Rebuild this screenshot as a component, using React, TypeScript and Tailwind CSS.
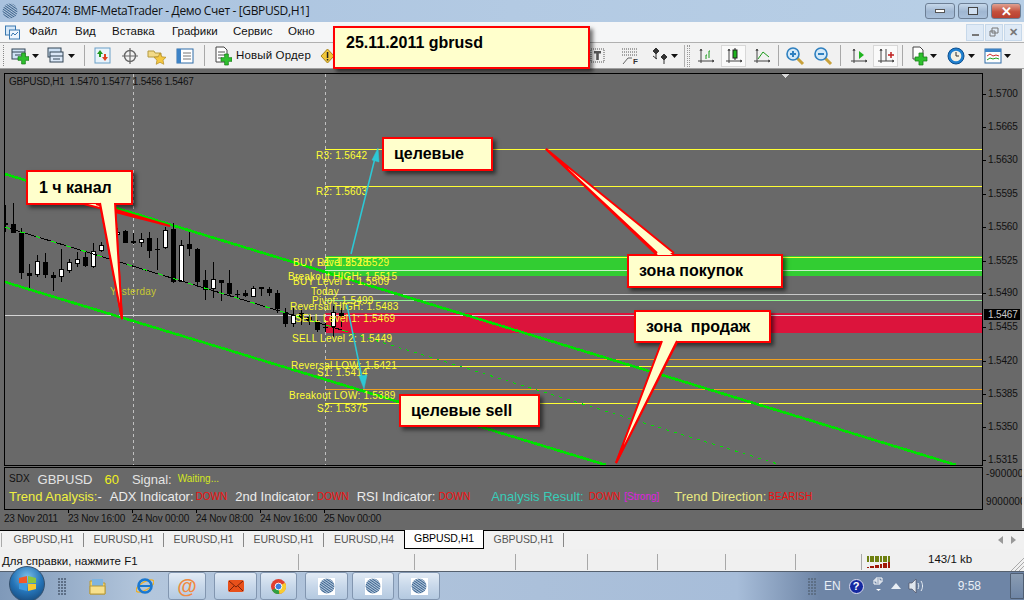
import React from "react";

const UI = "font-['Liberation_Sans',sans-serif]";

// candles in screen coordinates: [x, wickTop, bodyTop, bodyBottom, wickBottom, white]
const z3: [number, number, number, number, number, number][] = [
  [5, 135, 188, 196, 215, 0], [13, 130, 193, 218, 218, 0], [21, 205, 218, 338, 357, 0], [29, 312, 339, 347, 385, 0],
  [37, 285, 304, 344, 350, 1], [45, 280, 306, 345, 353, 0], [53, 337, 345, 353, 392, 0], [61, 267, 328, 350, 365, 1],
  [69, 297, 307, 332, 340, 1], [77, 277, 298, 311, 322, 1], [85, 277, 291, 318, 322, 0], [93, 250, 272, 322, 323, 1],
  [101, 245, 256, 272, 275, 1], [117, 205, 216, 226, 235, 1], [125, 210, 213, 248, 250, 0], [133, 220, 244, 250, 252, 0],
  [141, 220, 238, 248, 262, 1], [149, 215, 235, 272, 293, 0], [157, 235, 266, 268, 330, 0], [165, 200, 210, 265, 267, 1],
  [173, 190, 206, 365, 368, 0], [181, 240, 256, 365, 367, 1], [189, 215, 252, 266, 288, 0], [197, 265, 266, 365, 380, 0],
];
const z10: [number, number, number, number, number, number][] = [
  [205, 165, 195, 225, 255, 0], [213, 142, 192, 223, 250, 1], [221, 195, 195, 204, 257, 0], [229, 165, 205, 236, 240, 0],
  [237, 225, 236, 238, 248, 0], [245, 225, 233, 243, 245, 0], [253, 213, 220, 245, 246, 1], [261, 215, 216, 222, 242, 0],
  [269, 215, 222, 233, 243, 0], [277, 225, 235, 282, 295, 0], [285, 280, 290, 327, 335, 0], [293, 280, 300, 328, 335, 1],
  [301, 280, 295, 305, 330, 0], [309, 300, 305, 320, 330, 0], [317, 315, 322, 345, 350, 0], [325, 325, 335, 337, 350, 0],
];
const candles = [
  ...z3.map(([x, a, b, c, d, w]) => [x, 160 + a / 3, 160 + b / 3, 160 + c / 3, 160 + d / 3, w]),
  ...z10.map(([x, a, b, c, d, w]) => [x, 215 + a / 3, 215 + b / 3, 215 + c / 3, 215 + d / 3, w]),
  [333, 306, 312, 327, 337, 1],
  [341, 308, 313, 316, 327, 0],
].map((c) => c.map(Math.round));

const labels: [string, number, number][] = [
  ["R3: 1.5642", 316, 159], ["R2: 1.5603", 316, 195], ["BUY Level 2: 1.5529", 293, 266], ["R1: 1.5528", 317, 266],
  ["Breakout HIGH: 1.5515", 288, 280], ["BUY Level 1: 1.5509", 293, 285], ["Today", 311, 295], ["Pivot: 1.5499", 312, 304],
  ["Reversal HIGH: 1.5483", 290, 310], ["SELL Level 1: 1.5469", 295, 322], ["SELL Level 2: 1.5449", 292, 342],
  ["Reversal LOW: 1.5421", 291, 369], ["S1: 1.5414", 317, 376], ["Breakout LOW: 1.5389", 289, 399], ["S2: 1.5375", 317, 412],
];

const axis = [["1.5700", 94], ["1.5665", 127], ["1.5630", 160], ["1.5595", 194], ["1.5560", 227], ["1.5525", 261], ["1.5490", 293], ["1.5455", 327], ["1.5420", 361], ["1.5385", 394], ["1.5350", 427], ["1.5315", 460]] as [string, number][];

function Chart() {
  return (
    <svg viewBox="5 74 977 391" className="block h-[391px] w-[977px]" shapeRendering="crispEdges">
      <rect x="5" y="74" width="977" height="391" fill="#696969" />
      <rect x="325" y="256" width="657" height="20" fill="#32cd32" />
      <rect x="325" y="313" width="657" height="20" fill="#dc143c" />
      <line x1="133" y1="74" x2="133" y2="465" stroke="#c0c0c0" strokeDasharray="3 3" />
      <line x1="325" y1="74" x2="325" y2="465" stroke="#c0c0c0" strokeDasharray="3 3" />
      <line x1="325" y1="149.5" x2="982" y2="149.5" stroke="#ffff33" />
      <line x1="325" y1="186.5" x2="982" y2="186.5" stroke="#ffff33" />
      <line x1="325" y1="257.5" x2="982" y2="257.5" stroke="#ffff33" />
      <line x1="325" y1="270.5" x2="982" y2="270.5" stroke="#c8f0c8" />
      <line x1="325" y1="294.5" x2="982" y2="294.5" stroke="#c8c8c8" />
      <line x1="325" y1="300.5" x2="982" y2="300.5" stroke="#90ee90" />
      <line x1="5" y1="315.5" x2="982" y2="315.5" stroke="#d4d4d4" />
      <line x1="325" y1="359.5" x2="982" y2="359.5" stroke="#f0a020" />
      <line x1="325" y1="366.5" x2="982" y2="366.5" stroke="#ffff33" />
      <line x1="325" y1="389.5" x2="982" y2="389.5" stroke="#f0a020" />
      <line x1="325" y1="403.5" x2="982" y2="403.5" stroke="#ffff33" />
      <line x1="5" y1="174" x2="956" y2="465" stroke="#00e000" strokeWidth="2.6" />
      <line x1="5" y1="282" x2="606" y2="465" stroke="#00e000" strokeWidth="2.6" />
      {candles.map(([x, a, b, c, d, w]) => (
        <g key={x}>
          <rect x={x} y={a} width="1" height={d - a} fill="#000" />
          <rect x={x - 2} y={b} width="5" height={Math.max(c - b, 1)} fill="#000" />
          {w ? <rect x={x - 1} y={b + 1} width="3" height={Math.max(c - b - 2, 1)} fill="#fff" /> : null}
        </g>
      ))}
      <line x1="5" y1="227" x2="345" y2="331" stroke="#000" />
      <line x1="5" y1="227" x2="345" y2="331" stroke="#00ff00" strokeDasharray="5 11" />
      <line x1="345" y1="331" x2="781" y2="465" stroke="#00e000" strokeDasharray="3 5" />
      <path d="M782 74h7l-3.500 4z" fill="#d8d8d8" />
      <g shapeRendering="auto" fontFamily="'Liberation Sans',sans-serif" fontSize="10" letterSpacing="0.25">
        <text x="110" y="295" fill="#c8c832">Yesterday</text>
        {labels.map(([t, x, y]) => (
          <text key={t} x={x} y={y} fill="#ffff33">{t}</text>
        ))}
      </g>
      <text x="9" y="85" fontFamily="'Liberation Sans',sans-serif" fontSize="10" fill="#111" shapeRendering="auto" letterSpacing="-0.25" style={{ whiteSpace: "pre" }}>GBPUSD,H1  1.5470 1.5477 1.5456 1.5467</text>
      <g shapeRendering="auto" fill="#2cc8d6" stroke="#2cc8d6">
        <line x1="351" y1="254" x2="375" y2="158" strokeWidth="1.5" />
        <path d="M378 148l1 14-7-2z" strokeWidth="0.5" />
        <line x1="347" y1="305" x2="362" y2="378" strokeWidth="1.5" />
        <path d="M364 389l-5-13 8-1z" strokeWidth="0.5" />
      </g>
    </svg>
  );
}

function Callout({ x, y, w, h, t, px = 10, pb = 0 }: { x: number; y: number; w: number; h: number; t: string; px?: number; pb?: number }) {
  return (
    <div
      className={`absolute flex items-center whitespace-pre border-[2px] border-[#ff0000] bg-[#ffffcc] text-[16px] font-bold text-black shadow-[3px_3px_4px_rgba(0,0,0,0.55)] ${UI}`}
      style={{ left: x, top: y, width: w, height: h, paddingLeft: px, paddingBottom: pb }}
    >
      {t}
    </div>
  );
}

const Drop = () => <svg width="7" height="4" viewBox="0 0 7 4" className="shrink-0"><path d="M0 0h7L3.500 4z" fill="#111" /></svg>;
const Sep = () => <div className="mx-[1px] h-[21px] w-[1px] shrink-0 bg-[#a8a8a8]" />;
const Plus = ({ x, y, s = 11 }: { x: number; y: number; s?: number }) => (
  <path d={`M${x + s * 0.33} ${y}h${s * 0.34}v${s * 0.33}h${s * 0.33}v${s * 0.34}h${-s * 0.33}v${s * 0.33}h${-s * 0.34}v${-s * 0.33}h${-s * 0.33}v${-s * 0.34}h${s * 0.33}z`} fill="#2fc02f" stroke="#147a14" strokeWidth="0.7" />
);
const I = ({ children, w = 18 }: { children: React.ReactNode; w?: number }) => <svg width={w} height="20" viewBox={`0 0 ${w} 20`} className="shrink-0">{children}</svg>;

const Sphere = ({ size = 16 }: { size?: number }) => (
  <svg width={size} height={size} viewBox="0 0 16 16" className="shrink-0">
    <defs>
      <pattern id="dots" width="2" height="2" patternUnits="userSpaceOnUse" patternTransform="rotate(35)">
        <rect width="2" height="1" fill="#3c648f" /><rect y="1" width="2" height="1" fill="#b8cbdf" />
      </pattern>
    </defs>
    <circle cx="8" cy="8" r="7.500" fill="url(#dots)" />
  </svg>
);

const AxisIcon = ({ children }: { children: React.ReactNode }) => (
  <I><path d="M4 3v14M1 15h16M4 3l-1 2M4 3l1 2M15 14l2 1-2 1" stroke="#444" fill="none" strokeWidth="1" />{children}</I>
);

const Active = ({ children }: { children: React.ReactNode }) => (
  <div className="flex h-[22px] w-[25px] items-center justify-center border border-[#d8d8d8] bg-[#fafafa]">{children}</div>
);

function Toolbar() {
  return (
    <div className="flex h-[26px] shrink-0 items-center border-b border-[#a0a0a0] bg-[#f1f1f1] pl-[3px]">
      <div className="mr-[6px] h-[21px] w-[2px] border-l border-dotted border-[#888]" />
      <I><rect x="1" y="3" width="13" height="10" fill="#cfe2f5" stroke="#345" /><path d="M1 6h13M4 9h7" stroke="#345" /><Plus x={7} y={7} /></I>
      <div className="ml-[3px] mr-[8px]"><Drop /></div>
      <I><rect x="1" y="2" width="13" height="9" fill="#cfe2f5" stroke="#345" /><rect x="3" y="6" width="13" height="10" fill="#dbe8f7" stroke="#345" /><path d="M3 10h13M6 13h7" stroke="#345" /></I>
      <div className="ml-[3px] mr-[8px]"><Drop /></div>
      <Sep />
      <div className="ml-[7px]"><I><rect x="2" y="2" width="15" height="15" fill="#e8f3fb" stroke="#6aa0c8" /><path d="M7 4l3 4H8v3H6V8H4z" fill="#1e9a1e" /><path d="M12 15l-3-4h2V8h2v3h2z" fill="#e04020" /></I></div>
      <div className="ml-[9px]"><I w={20}><circle cx="10" cy="10" r="5.500" fill="none" stroke="#666" strokeWidth="1.400" /><path d="M10 2v16M2 10h16" stroke="#666" strokeWidth="1.200" /></I></div>
      <div className="ml-[7px]"><I w={20}><path d="M1 5h6l1 2h6v4H1z" fill="#f3da88" stroke="#b49a40" /><path d="M13 7l1.800 3.800 4.200.5-3 2.900.8 4.100-3.800-2-3.800 2 .8-4.100-3-2.900 4.200-.5z" fill="#f5c842" stroke="#b08a20" strokeWidth=".7" /></I></div>
      <div className="ml-[9px]"><I><rect x="1" y="3" width="16" height="14" fill="#fff" stroke="#2f6da8" /><rect x="1" y="3" width="4" height="14" fill="#3d83c6" /><path d="M7 7h8M7 10h8M7 13h8" stroke="#777" /></I></div>
      <div className="ml-[9px]"><Sep /></div>
      <div className="ml-[8px]"><I><path d="M2 1h8l3 3v12H2z" fill="#fff" stroke="#444" /><path d="M4 6h7M4 9h7M4 12h4" stroke="#555" /><Plus x={7} y={8} /></I></div>
      <span className="ml-[4px] w-[75px] whitespace-nowrap text-[11.5px] tracking-[0.15px] text-[#111]">Новый Ордер</span>
      <div className="ml-[9px]"><svg width="15" height="16" viewBox="0 0 15 16"><path d="M7.500 1L14 8l-6.500 7L1 8z" fill="#f2c73a" stroke="#a8841c" /><path d="M6.800 4h1.500v6H6.800zM6.800 11h1.500v1.500H6.800z" fill="#222" /></svg></div>

      <div className="ml-[253px]"><I><path d="M3 3h13v13H3z" fill="none" stroke="#555" strokeDasharray="1 1" /><path d="M6 5h7v2.500h-2.200V14H8.200V7.500H6z" fill="#555" /></I></div>
      <div className="ml-[15px]"><I><path d="M1 3h16M1 6h16M1 9h16" stroke="#555" strokeDasharray="1 1" /><path d="M2 18l5-6h4" fill="none" stroke="#666" /><text x="12" y="18" fontSize="8" fill="#333" fontFamily="'Liberation Sans',sans-serif" fontWeight="bold">F</text></I></div>
      <div className="ml-[12px]"><I><path d="M5 2l3 3-3 3-3-3zM13 8l3 3-3 3-3-3zM2 10l4 3" fill="#333" stroke="#333" /><path d="M5 8v5M13 14v4" stroke="#333" /></I></div>
      <div className="ml-[2px]"><Drop /></div>
      <div className="ml-[6px] h-[22px] w-[1px] bg-[#b0b0b0]" />
      <div className="ml-[2px] h-[22px] w-[3px] border-x border-dotted border-[#999]" />
      <div className="ml-[7px]"><AxisIcon><path d="M9 13V9h1M12 12V5h1" stroke="#1a9a1a" fill="none" /></AxisIcon></div>
      <div className="ml-[6px]"><Active><AxisIcon><rect x="8" y="4" width="4" height="8" fill="#1fb41f" stroke="#222" /><path d="M10 2v2M10 12v2" stroke="#222" /></AxisIcon></Active></div>
      <div className="ml-[7px]"><AxisIcon><path d="M5 13l5-7 6 5" stroke="#1a9a1a" fill="none" /></AxisIcon></div>
      <div className="ml-[6px]"><Sep /></div>
      <div className="ml-[5px]"><I w={20}><path d="M12 12l6 6" stroke="#c9a13a" strokeWidth="3" /><circle cx="8" cy="8" r="6" fill="#d4e9f8" stroke="#2f80c0" strokeWidth="1.600" /><path d="M5 8h6M8 5v6" stroke="#2f80c0" strokeWidth="2" /></I></div>
      <div className="ml-[8px]"><I w={20}><path d="M12 12l6 6" stroke="#c9a13a" strokeWidth="3" /><circle cx="8" cy="8" r="6" fill="#d4e9f8" stroke="#2f80c0" strokeWidth="1.600" /><path d="M5 8h6" stroke="#2f80c0" strokeWidth="2" /></I></div>
      <div className="ml-[6px]"><Sep /></div>
      <div className="ml-[8px]"><AxisIcon><path d="M9 5l5 4-5 4z" fill="#1fb41f" /></AxisIcon></div>
      <div className="ml-[5px]"><Active><AxisIcon><path d="M9 3v12" stroke="#444" /><path d="M11 9h6M14 6v6" stroke="#c02020" strokeWidth="1.500" /></AxisIcon></Active></div>
      <div className="ml-[3px]"><Sep /></div>
      <div className="ml-[6px]"><I><path d="M3 1h7l3 3v9H3z" fill="#fff" stroke="#444" /><Plus x={5} y={7} s={12} /></I></div>
      <div className="ml-[2px]"><Drop /></div>
      <div className="ml-[10px]"><I><circle cx="9" cy="10" r="8" fill="#1f7fcf" stroke="#0d4f8f" /><circle cx="9" cy="10" r="5.300" fill="#f4f1e4" /><path d="M9 6v4h3" stroke="#333" fill="none" /></I></div>
      <div className="ml-[3px]"><Drop /></div>
      <div className="ml-[9px]"><I><rect x="1" y="3" width="16" height="14" fill="#fdfdfd" stroke="#2f6da8" /><rect x="1" y="3" width="16" height="3" fill="#3d83c6" /><path d="M3 10l3-2 3 2 3-1 3 1" stroke="#d03030" fill="none" /><path d="M3 14l3-2 3 1 3-1 3 1" stroke="#20a020" fill="none" /></I></div>
      <div className="ml-[2px]"><Drop /></div>
    </div>
  );
}

const WinBtn = ({ children, red }: { children: React.ReactNode; red?: boolean }) => (
  <div className={`flex h-[16px] w-[30px] items-center justify-center rounded-[3px] border border-[#6d7f95] ${red ? "bg-[linear-gradient(180deg,#e0a090_0%,#c4503c_55%,#b84030_100%)]" : "bg-[linear-gradient(180deg,#c5d7ea_0%,#9fb6d1_55%,#a9c0da_100%)]"}`}>
    {children}
  </div>
);

const MdiBtn = ({ children }: { children: React.ReactNode }) => (
  <div className="flex h-[17px] w-[18px] items-center justify-center border border-[#c6d8ea] bg-[#dfeaf6]">{children}</div>
);

const TaskBtn = ({ w, children }: { w: number; children: React.ReactNode }) => (
  <div className="flex h-[28px] shrink-0 items-center justify-center rounded-[3px] border border-[#8296b0] bg-[linear-gradient(180deg,#e2ebf5_0%,#c8d8ea_50%,#b4c9e0_100%)]" style={{ width: w }}>
    {children}
  </div>
);

const MtBtn = ({ w }: { w: number }) => (
  <TaskBtn w={w}><div className="flex h-[17px] w-[17px] items-center justify-center bg-white"><Sphere /></div></TaskBtn>
);

const Grip = () => (
  <div className="grid shrink-0 grid-cols-3 gap-[1px]">
    {Array.from({ length: 18 }).map((_, i) => <div key={i} className="h-[2px] w-[2px] bg-[#5d6f86]" />)}
  </div>
);

const tabs = ["GBPUSD,H1", "EURUSD,H1", "EURUSD,H1", "EURUSD,H1", "EURUSD,H4"];

export default function App() {
  return (
    <div className={`relative flex h-[600px] w-[1024px] flex-col overflow-hidden bg-[#696969] ${UI}`}>
      {/* title bar */}
      <div className="flex h-[22px] shrink-0 items-center bg-[linear-gradient(90deg,#a9c2de_0%,#b3cae3_50%,#b8cfe6_100%)] pl-[2px] pr-[3px]">
        <Sphere />
        <span className="ml-[4px] text-[12px] text-[#111] font-['Open_Sans',sans-serif] tracking-[-0.35px]">5642074: BMF-MetaTrader - Демо Счет - [GBPUSD,H1]</span>
        <div className="ml-auto flex gap-[3px]">
          <WinBtn><div className="h-[4px] w-[10px] border border-[#555] bg-white" /></WinBtn>
          <WinBtn><div className="h-[8px] w-[10px] border-[1.5px] border-[#444] bg-[#d0dff0]" /></WinBtn>
          <WinBtn red><span className="text-[13px] font-bold leading-none text-white">✕</span></WinBtn>
        </div>
      </div>
      {/* menu */}
      <div className="flex h-[21px] shrink-0 items-center border-b border-[#b0b0b0] bg-[#f5f6f7] pl-[5px] pr-[2px] text-[11.5px] text-[#111]">
        <svg width="15" height="15" viewBox="0 0 15 15" className="shrink-0"><rect x="0.500" y="1" width="10" height="9" fill="#d6e8f8" stroke="#3a78b0" /><rect x="4.500" y="5" width="10" height="9" fill="#eef6fd" stroke="#3a78b0" /><path d="M6 11l2-3 2 2 3-3" stroke="#3a78b0" fill="none" /></svg>
        <span className="ml-[9px] w-[27px]">Файл</span>
        <span className="ml-[19px] w-[18px]">Вид</span>
        <span className="ml-[19px] w-[41px]">Вставка</span>
        <span className="ml-[19px] w-[43px]">Графики</span>
        <span className="ml-[18px] w-[37px]">Сервис</span>
        <span className="ml-[18px] w-[26px]">Окно</span>
        <div className="ml-auto flex gap-[1px]">
          <MdiBtn><div className="mt-[6px] h-[2px] w-[7px] bg-[#777]" /></MdiBtn>
          <MdiBtn><svg width="10" height="10" viewBox="0 0 10 10"><path d="M3 1h6v5H3zM1 4h5v5H1z" fill="none" stroke="#777" /></svg></MdiBtn>
          <MdiBtn><span className="text-[11px] font-bold text-[#777]">✕</span></MdiBtn>
        </div>
      </div>
      <Toolbar />
      {/* workspace */}
      <div className="flex h-[459px] shrink-0 flex-col border-r-2 border-[#e8e8e8] pl-[4px] pt-[4px]">
        <div className="flex">
          <div className="flex w-[979px] flex-col">
            <div className="h-[393px] border border-black"><Chart /></div>
            <div className="mt-[1px] h-[43px] border border-black bg-[#696969] pl-[4px] pt-[1px] leading-none">
              <div className="flex h-[20px] items-center whitespace-nowrap">
                <span className="text-[10px] text-[#111]">SDX</span>
                <span className="ml-[8px] text-[13px] text-[#e4e4e4]">GBPUSD</span>
                <span className="ml-[12px] text-[13px] text-[#f0f020]">60</span>
                <span className="ml-[13px] text-[13px] text-[#e4e4e4]">Signal:</span>
                <span className="ml-[6px] text-[10px] text-[#d4e820]">Waiting...</span>
              </div>
              <div className="flex h-[15px] items-center whitespace-nowrap text-[13px] text-[#ececec]">
                <span className="text-[#f0f040]">Trend Analysis:</span><span>-</span>
                <span className="ml-[8px]">ADX Indicator:</span>
                <span className="ml-[2px] text-[10px] text-[#f01010]">DOWN</span>
                <span className="ml-[8px]">2nd Indicator:</span>
                <span className="ml-[3px] text-[10px] text-[#f01010]">DOWN</span>
                <span className="ml-[8px]">RSI Indicator:</span>
                <span className="ml-[3px] text-[10px] text-[#f01010]">DOWN</span>
                <span className="ml-[21px] text-[#38ccb8]">Analysis Result:</span>
                <span className="ml-[5px] text-[10px] text-[#f01010]">DOWN</span>
                <span className="ml-[4px] text-[10px] text-[#e020e0]">[Strong]</span>
                <span className="ml-[15px] text-[#e8e880]">Trend Direction:</span>
                <span className="ml-[2px] text-[10px] text-[#f01010]">BEARISH</span>
              </div>
            </div>
          </div>
          <div className="relative w-[39px] overflow-hidden text-[10px] leading-none text-[#111]">
            {axis.map(([t, y]) => (
              <div key={t} className="absolute left-0 flex items-center" style={{ top: y - 73 - 5 }}>
                <div className="h-[1px] w-[3px] bg-black" />
                <span className="ml-[2px] tracking-[-0.15px]">{t}</span>
              </div>
            ))}
            <div className="absolute left-[1px] top-[236px] flex h-[11px] w-[36px] items-center bg-black pl-[4px] tracking-[-0.15px] text-[#c8c8c8]">1.5467</div>
            <span className="absolute left-[3px] top-[396px] whitespace-nowrap tracking-[0.1px]">-9000000</span>
            <span className="absolute left-[3px] top-[424px] whitespace-nowrap tracking-[0.1px]">9000000</span>
          </div>
        </div>
        <div className="flex h-[17px] items-center text-[10px] leading-none tracking-[-0.2px] text-[#111]">
          {["23 Nov 2011", "23 Nov 16:00", "24 Nov 00:00", "24 Nov 08:00", "24 Nov 16:00", "25 Nov 00:00"].map((t, i) => (
            <div key={i} className="relative w-[64px] whitespace-nowrap">
              {i > 0 && <div className="absolute left-[0px] top-[-5px] h-[4px] w-[1px] bg-black" />}
              {t}
            </div>
          ))}
        </div>
      </div>
      {/* tabs */}
      <div className="mt-[2px] flex h-[19px] shrink-0 items-stretch border-t border-black bg-[#f1f1f1] text-[10.5px] tracking-[-0.1px] text-[#555]">
        <div className="w-[4px]"><div className="my-[2px] h-[14px] w-[1px] translate-x-[1px] bg-[#aaa]" /></div>
        {tabs.map((t, i) => (
          <div key={i} className={`my-[2px] flex w-[80px] items-center justify-center ${i < 4 ? "border-r border-[#888]" : ""}`}>
            {t}
          </div>
        ))}
        <div className="-mt-[1px] flex w-[80px] items-center justify-center border-x border-b border-black bg-white text-black">GBPUSD,H1</div>
        <div className="my-[2px] flex w-[80px] items-center justify-center border-r border-[#888]">GBPUSD,H1</div>
        <div className="ml-auto mr-[8px] flex items-center gap-[8px]">
          <svg width="5" height="8" viewBox="0 0 5 8"><path d="M5 0v8L0 4z" fill="#999" /></svg>
          <svg width="5" height="8" viewBox="0 0 5 8"><path d="M0 0v8l5-4z" fill="#999" /></svg>
        </div>
      </div>
      {/* status bar */}
      <div className="relative flex h-[23px] shrink-0 items-end border-b-[1.5px] border-[#55606e] bg-[#f0f0f0] pb-[1px] text-[11.5px] text-[#111]">
        <div className="flex h-[16px] w-[299px] items-center border-r border-[#a8a8a8] pl-[2px]">Для справки, нажмите F1</div>
        {[116, 101, 72, 70, 68, 70, 66].map((w, i) => (
          <div key={i} className="h-[16px] border-r border-[#a8a8a8]" style={{ width: w }} />
        ))}
        <svg width="24" height="12" viewBox="0 0 24 12" className="mb-[2px] ml-[5px] shrink-0" shapeRendering="crispEdges">
          {Array.from({ length: 9 }).map((_, i) => (
            <g key={i}>
              <rect x={i * 2.6} y="0" width="2" height="6" fill="#6e8010" />
              <rect x={i * 2.6} y={12 - 1 - i * 0.6} width="2" height={1 + i * 0.6} fill="#a01808" />
            </g>
          ))}
        </svg>
        <span className="mb-[2px] ml-[37px]">143/1 kb</span>
        <svg width="14" height="14" viewBox="0 0 14 14" className="absolute bottom-0 right-0"><path d="M14 1L1 14M14 5L5 14M14 9l-5 5" stroke="#aaa" /></svg>
      </div>
      {/* taskbar */}
      <div className="flex flex-1 items-center bg-[linear-gradient(90deg,#7f99b9_0%,#b3c6dc_14%,#a7bdd9_72%,#6e85a6_80%,#6e85a6_100%)] text-white">
        <div className="ml-[58px]"><Grip /></div>
        <svg width="18" height="20" viewBox="0 0 18 20" className="ml-[23px] shrink-0"><path d="M1 5h6l1 2h8v11H1z" fill="#f2d26a" stroke="#b79a3a" /><rect x="3" y="3" width="11" height="8" fill="#7fb4e0" /><path d="M1 10h15v8H1z" fill="#f7e08c" stroke="#b79a3a" /></svg>
        <svg width="18" height="20" viewBox="0 0 18 20" className="ml-[29px] shrink-0"><ellipse cx="9" cy="10" rx="10" ry="4" fill="none" stroke="#f0b020" strokeWidth="1.300" transform="rotate(-30 9 10)" /><circle cx="9" cy="10" r="6.500" fill="none" stroke="#1b78d0" strokeWidth="2.600" /><path d="M3 10h12" stroke="#1b78d0" strokeWidth="2" /></svg>
        <div className="ml-[14px]"><TaskBtn w={38}><span className="text-[20px] font-bold leading-none text-[#f08a40]">@</span></TaskBtn></div>
        <div className="ml-[8px]"><TaskBtn w={43}><svg width="16" height="12" viewBox="0 0 16 12"><rect width="16" height="12" rx="2" fill="#e8501a" /><path d="M1 1l7 6 7-6M1 11l5-5M15 11l-5-5" stroke="#7a2208" fill="none" /></svg></TaskBtn></div>
        <div className="ml-[3px]"><TaskBtn w={37}><svg width="15" height="15" viewBox="0 0 16 16"><circle cx="8" cy="8" r="8" fill="#e04030" /><path d="M8 8L1 12a8 8 0 0 0 8 4z" fill="#30a040" /><path d="M8 8l7-4a8 8 0 0 1-6 12z" fill="#f8cc30" /><circle cx="8" cy="8" r="3.600" fill="#3a7fe0" stroke="#fff" /></svg></TaskBtn></div>
        <div className="ml-[8px]"><MtBtn w={43} /></div>
        <div className="ml-[4px]"><MtBtn w={42} /></div>
        <div className="ml-[4px]"><MtBtn w={42} /></div>
        <div className="ml-auto flex items-center">
          <Grip />
          <span className="ml-[8px] text-[12px] text-[#e8eef5]">EN</span>
          <div className="ml-[8px] flex h-[15px] w-[15px] items-center justify-center rounded-full border border-[#dde] bg-[#1428a0] text-[11px] font-bold text-white">?</div>
          <svg width="10" height="20" viewBox="0 0 10 20" className="ml-[9px]"><path d="M3 2h6v4H3zM1 4h6v4H1z" fill="none" stroke="#fff" /><path d="M3 13h5l-2.500 2z" fill="#fff" /></svg>
          <svg width="10" height="6" viewBox="0 0 10 6" className="ml-[8px]"><path d="M0 6h10L5 0z" fill="#e8eef5" /></svg>
          <svg width="17" height="16" viewBox="0 0 17 16" className="ml-[7px]"><path d="M1 5h3l4-4v14l-4-4H1z" fill="#dfe6ee" stroke="#445" strokeWidth=".6" /><path d="M10 5c1 2 1 4 0 6M13 3c2 3 2 7 0 10" stroke="#e8eef5" fill="none" /></svg>
          <span className="ml-[33px] text-[12px] text-[#e8eef5]">9:58</span>
          <div className="ml-[29px] h-[26px] w-[14px] rounded-l-[1px] border border-[#4f5e72] bg-[linear-gradient(180deg,#8a9cb2,#6e85a6)]" />
        </div>
      </div>
      {/* start orb */}
      <div className="absolute left-[9px] top-[566px] flex h-[36px] w-[36px] items-center justify-center rounded-full border border-[#33506e] bg-[radial-gradient(circle_at_50%_30%,#7cc0e8_0%,#2574b8_50%,#123c68_100%)]">
        <svg width="19" height="18" viewBox="0 0 19 18"><path d="M1 3l8-2v7H1z" fill="#f0582a" /><path d="M10 1l8 2v5h-8z" fill="#8cc63f" /><path d="M1 9h8v7l-8-2z" fill="#3d9be0" /><path d="M10 9h8v5l-8 2z" fill="#f8c830" /></svg>
      </div>

      {/* callout tails */}
      <svg className="pointer-events-none absolute left-0 top-0 z-10 h-[600px] w-[1024px]" viewBox="0 0 1024 600">
        <g fill="#ffffcc" stroke="#ff0000" strokeWidth="2">
          <path d="M84 204L170 226L96 204" />
          <path d="M100 204L122 319L115 204" />
          <path d="M657 255L546 149L674 255" />
          <path d="M662 342L616 463L677 342" />
        </g>
      </svg>
      <Callout x={333} y={26} w={257} h={43} t="25.11.2011 gbrusd" px={11} pb={9} />
      <Callout x={26} y={170} w={107} h={35} t="1 ч канал" px={11} />
      <Callout x={382} y={137} w={111} h={34} t="целевые" />
      <Callout x={627} y={254} w={156} h={34} t="зона покупок" />
      <Callout x={634} y={310} w={137} h={33} t="зона  продаж" />
      <Callout x={399} y={394} w={141} h={33} t="целевые sell" />
      <svg className="pointer-events-none absolute left-0 top-0 z-10 h-[600px] w-[1024px]" viewBox="0 0 1024 600">
        <g fill="#ffffcc" stroke="#ff0000" strokeWidth="2">
          <path d="M100 203L122 319L115 203" />
          <path d="M657 253L546 149L674 253" />
          <path d="M662 341L616 463L677 341" />
        </g>
      </svg>
    </div>
  );
}
